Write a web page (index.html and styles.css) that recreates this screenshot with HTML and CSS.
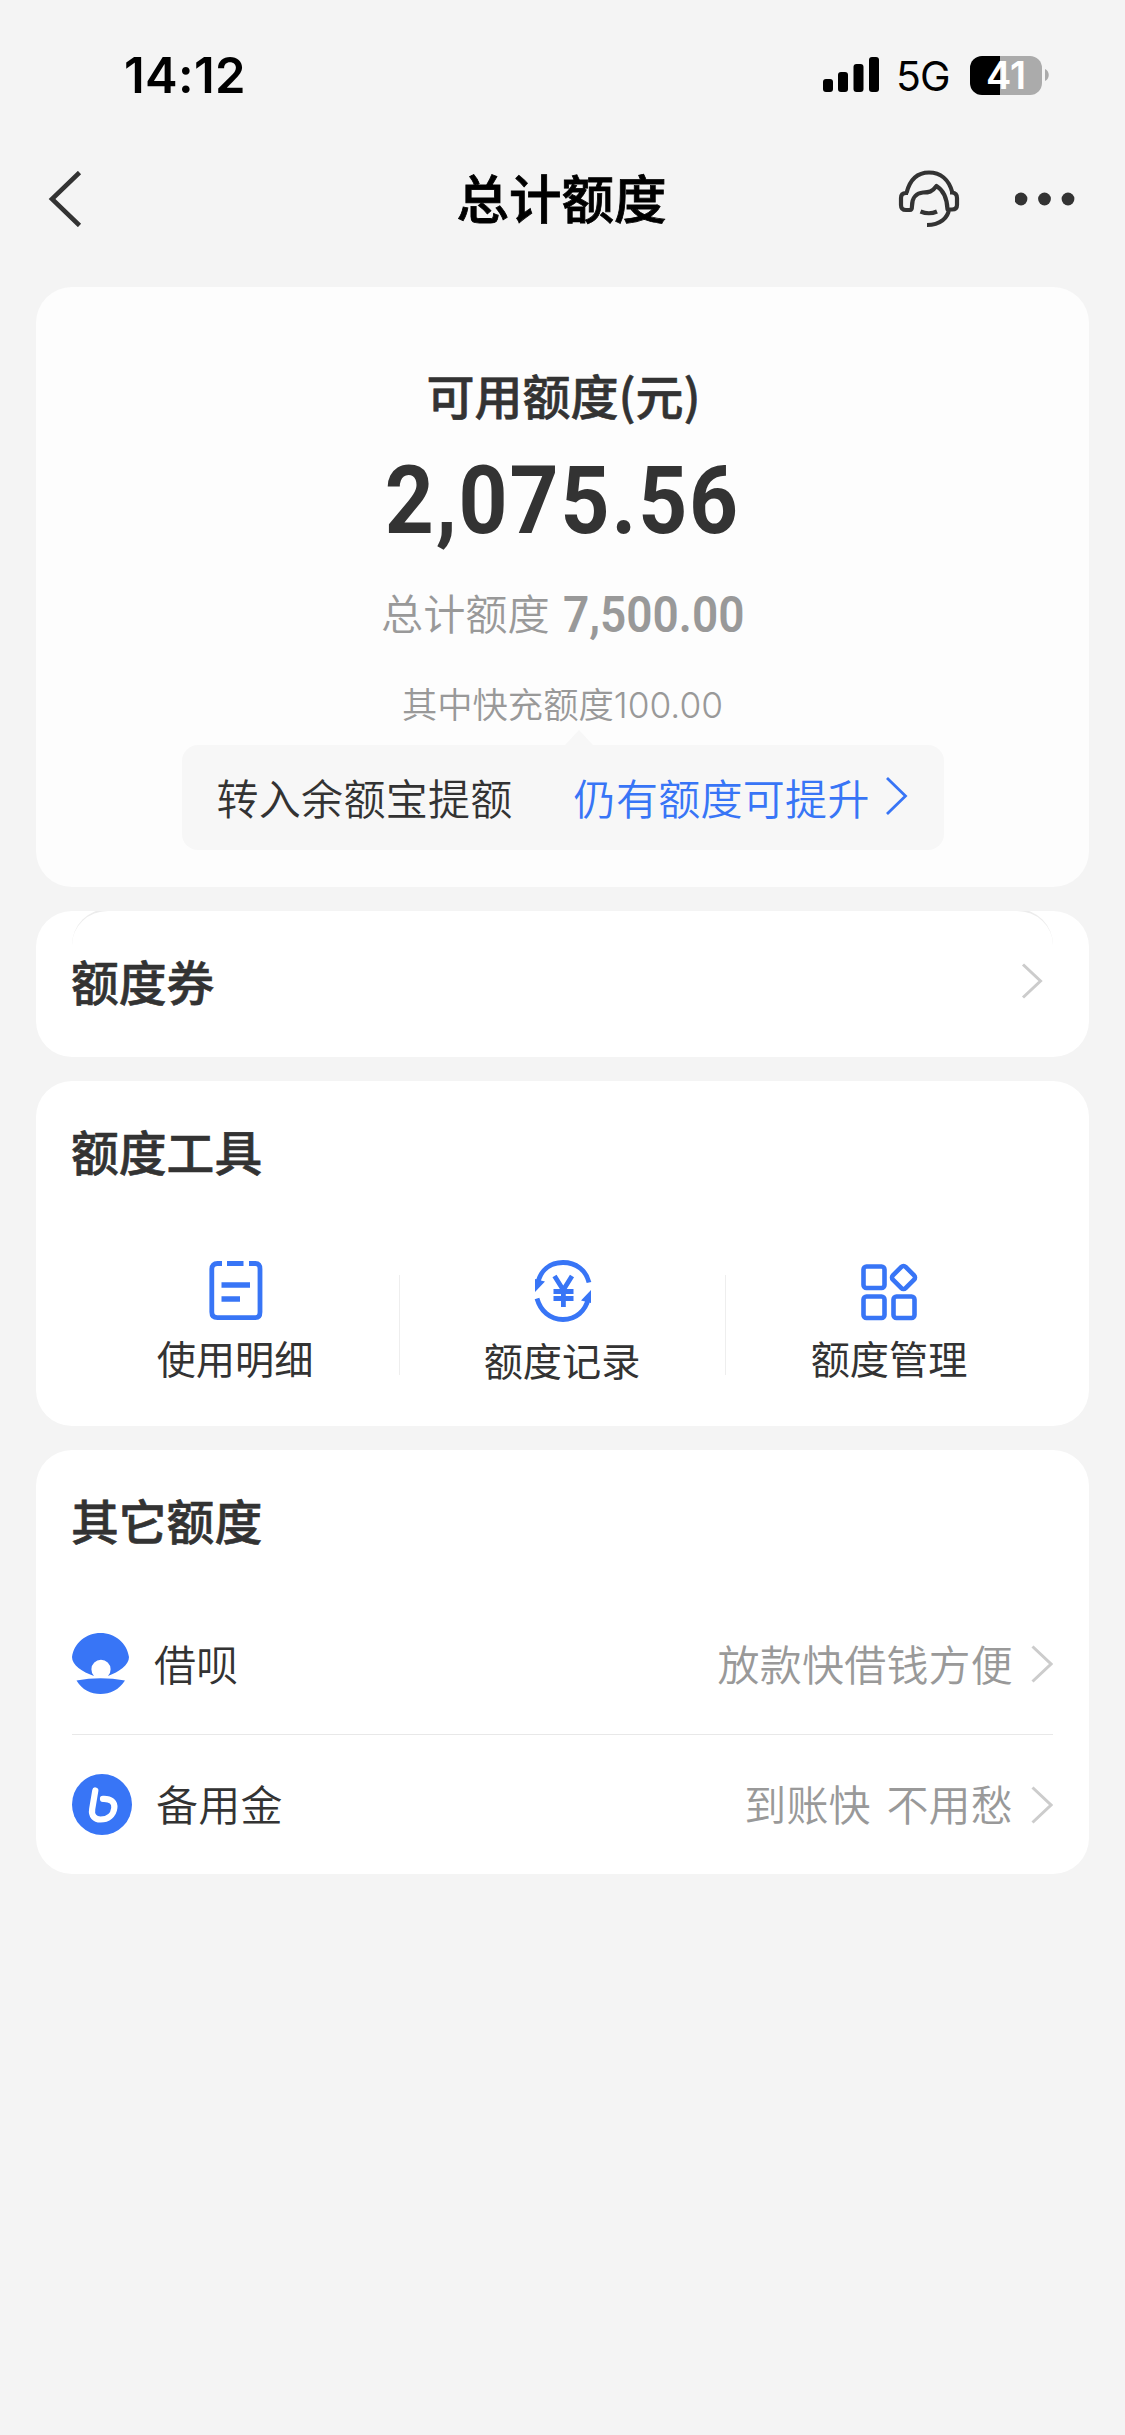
FILE: index.html
```html
<!DOCTYPE html>
<html lang="zh-CN">
<head>
<meta charset="utf-8">
<title>总计额度</title>
<link rel="stylesheet" href="styles.css">
</head>
<body>
<div class="status">
  <div class="time">14:12</div>
  <div class="status-right">
    <svg class="signal" width="56" height="36" viewBox="0 0 56 36"><rect x="0" y="22" width="10" height="13" rx="3"/><rect x="15" y="15" width="10" height="20" rx="3"/><rect x="30.500" y="7" width="10" height="28" rx="3"/><rect x="46" y="0" width="10" height="35" rx="3"/></svg>
    <span class="net">5G</span>
    <div class="battery"><span>41</span></div>
    <svg class="nub" width="4" height="12" viewBox="0 0 4 12"><path d="M0 0C5 2 5 10 0 12Z" fill="#ababab"/></svg>
  </div>
</div>
<header class="nav">
  <svg class="back" width="34" height="56" viewBox="0 0 34 56"><path d="M31.500 1.500L4 28L31.500 54.500" fill="none" stroke="#333" stroke-width="4.600"/></svg>
  <h1>总计额度</h1>
  <div class="nav-actions">
    <svg width="62" height="60" viewBox="0 0 62 60" fill="none" stroke="#333" stroke-width="4.200" stroke-linejoin="round"><path d="M8.500 24C12 10 20 3.500 31 3.500S51 10 54.500 24M13 41H8Q3 41 3 36V29Q3 24 8 24H10M12 41Q14 41 14 37C14 28 19 24 25 23.500C31 23.500 34 23 38.500 17C45 21 49 28 49.500 40.500H54Q59 40.500 59 36V29Q59 24 54 23.500H52M51 40C50 49 42 56 29 56M22.500 42.500Q31 46 39 42.500"/></svg>
    <svg width="60" height="14" viewBox="0 0 60 14" fill="#333"><circle cx="6" cy="7" r="6.400"/><circle cx="29.500" cy="7" r="6.400"/><circle cx="53" cy="7" r="6.400"/></svg>
  </div>
</header>
<main>
  <section class="card summary">
    <div class="label">可用额度(元)</div>
    <div class="amount">2,075.56</div>
    <div class="total">总计额度<b>7,500.00</b></div>
    <div class="extra">其中快充额度<span>100.00</span></div>
    <div class="tip">
      <span>转入余额宝提额</span>
      <a>仍有额度可提升</a>
      <svg width="24" height="38" viewBox="0 0 24 38"><path d="M2 1L20.500 19L2 37" fill="none" stroke="#3875f6" stroke-width="2.800"/></svg>
    </div>
  </section>
  <section class="card coupon">
    <h2>额度券</h2>
    <svg class="chev" width="22" height="38" viewBox="0 0 22 38"><path d="M2 2.500L19.500 19L2 35.500"/></svg>
  </section>
  <section class="card tools">
    <h2>额度工具</h2>
    <div class="grid">
      <div class="tool">
        <svg width="60" height="64" viewBox="0 0 60 64" fill="none" stroke="#3875f6" stroke-width="4.800"><path d="M16.500 4.500H12Q6.300 4.500 6.300 10V53Q6.300 58.700 12 58.700H50Q54.500 58.700 54.500 53V10Q54.500 4.500 50 4.500H43.500M21.500 4.500H38" transform="translate(-.5 0)"/><path d="M15.500 26H44M15.500 40H34" stroke-width="5.400"/></svg>
        <span>使用明细</span>
      </div>
      <div class="tool mid">
        <svg width="60" height="64" viewBox="0 0 60 64" fill="none" stroke="#3875f6" stroke-width="4.800"><path d="M4.500 25C7.500 11 17 3.500 30 3.500S53 11 56 23.500M4 39.500C7.500 52 17 60.500 30 60.500S52.500 52 55.500 39"/><path d="M2 20V33L12 22.500ZM58 44V31L48 41.500Z" fill="#3875f6" stroke="none"/><path d="M21.500 17L30.300 31L39 17M20.500 32.500H40.500M20.500 39.500H40.500M30.400 31V48" stroke-width="4.800"/></svg>
        <span>额度记录</span>
      </div>
      <div class="tool">
        <svg width="60" height="64" viewBox="0 0 60 64" fill="none" stroke="#3875f6" stroke-width="4.600"><rect x="3.500" y="7.500" width="21" height="21.500" rx="3"/><rect x="3.500" y="37.500" width="21" height="21.500" rx="3"/><rect x="33.500" y="37.500" width="21" height="21.500" rx="3"/><rect x="34.500" y="9.500" width="18" height="18" rx="3" transform="rotate(45 43.500 18.500)"/></svg>
        <span>额度管理</span>
      </div>
    </div>
  </section>
  <section class="card others">
    <h2>其它额度</h2>
    <div class="row">
      <svg width="58" height="62" viewBox="0 0 58 62" fill="#3875f6"><path d="M22 43C10 39 0 32 0 24C2 10 14 0 28.500 0S55 10 57 24C57 32 47 39 36 43A9.600 9.600 0 1 0 22 43ZM4.500 47.500Q28.500 43 53 47.500C47 57 38 61 28.500 61S10 57 4.500 47.500Z"/></svg>
      <span class="name">借呗</span>
      <span class="desc">放款快借钱方便</span>
      <svg class="chev" width="22" height="38" viewBox="0 0 22 38"><path d="M1.500 1.500L20 19L1.500 36.500"/></svg>
    </div>
    <div class="row">
      <svg width="60" height="62" viewBox="0 0 60 62"><ellipse cx="30" cy="30.500" rx="30" ry="30.500" fill="#3875f6"/><path d="M23.300 16.500L20.200 35C19 42 23 45.500 28.500 45.500C36 45.500 41.500 41 42.300 34C43 28 39 24.500 31 24.800" fill="none" stroke="#fff" stroke-width="6.200" stroke-linecap="round"/></svg>
      <span class="name">备用金</span>
      <span class="desc">到账快 不用愁</span>
      <svg class="chev" width="22" height="38" viewBox="0 0 22 38"><path d="M1.500 1.500L20 19L1.500 36.500"/></svg>
    </div>
  </section>
</main>
</body>
</html>
```
FILE: styles.css
```css
* { box-sizing: border-box; }
body { margin: 0; min-height: 2435px; background: #f4f4f4; color: #333; font-family: "Noto Sans CJK SC", sans-serif; }
svg { display: block; flex: none; }
h1, h2 { margin: 0; }
.status { height: 140px; padding: 45px 76px 0 124px; display: flex; justify-content: space-between; align-items: flex-start; color: #000; }
.time { padding-top: 1px; font: 600 49px/60px Inter, sans-serif; letter-spacing: .3px; }
.status-right { display: flex; align-items: center; height: 60px; }
.net { margin: 2px 0 0 17px; width: 74px; font: 400 41px/50px Inter, sans-serif; letter-spacing: -.8px; }
.battery { width: 72px; height: 39px; border-radius: 12px; background: linear-gradient(90deg, #000 30px, #ababab 30px); color: #fff; text-align: center; font: 600 38px/38px Inter, sans-serif; }
.nub { margin-left: 3px; }
.nav { height: 147px; padding: 0 50px 30px 48px; display: flex; align-items: center; justify-content: space-between; position: relative; }
.nav h1 { position: absolute; left: 0; right: 2px; top: 18px; text-align: center; font-size: 52.5px; line-height: 76px; font-weight: 500; color: #000; -webkit-text-stroke: .8px; }
.nav-actions { display: flex; align-items: center; gap: 55px; }
main { padding: 0 36px; display: flex; flex-direction: column; gap: 24px; }
.card { background: #fff; border-radius: 36px; padding: 0 36px; }
.card h2 { margin-left: -1px; font-size: 47.800px; font-weight: 500; line-height: 72px; -webkit-text-stroke: .6px; }
.summary { height: 600px; background: #fdfdfd; padding-top: 71px; display: flex; flex-direction: column; align-items: center; }
.label { padding-left: 2px; font-size: 48px; line-height: 72px; font-weight: 500; -webkit-text-stroke: .6px; }
.amount { margin-top: 21px; font: 700 95px/100px Roboto, sans-serif; letter-spacing: 2.100px; transform: scaleX(.9); }
.total { margin-top: 30px; height: 60px; display: flex; align-items: center; color: #999; font-size: 42.200px; font-weight: 350; }
.total b { margin: 7px -8px 0 5px; font: 600 50px/60px Roboto, sans-serif; transform: scaleX(.92); }
.extra { margin-top: 37px; height: 50px; line-height: 50px; color: #999; font-size: 35.300px; font-weight: 350; }
.extra span { font-family: Inter, sans-serif; font-weight: 300; }
.tip { position: relative; margin-top: 17px; width: 762px; height: 105px; border-radius: 16px; background: #f7f7f7; display: flex; align-items: center; padding: 0 0 3px 35px; font-size: 42px; letter-spacing: .3px; font-weight: 350; white-space: nowrap; }
.tip::before { content: ""; position: absolute; left: 383px; top: -15px; border: solid transparent; border-width: 0 14px 15px; border-bottom-color: #f7f7f7; }
.tip a { margin-left: 61px; color: #3875f6; }
.tip svg { margin-left: 15px; }
.coupon { position: relative; overflow: hidden; height: 146px; display: flex; align-items: center; justify-content: space-between; padding: 0 46px 6px 36px; }
.coupon::before { content: ""; position: absolute; inset: -2px 36px 0; border-top: 2px solid #ececec; border-radius: 36px; }
.chev path { fill: none; stroke: #ccc; stroke-width: 3; }
.tools { height: 345px; padding-top: 34px; }
.grid { display: grid; grid-template-columns: repeat(3, 1fr); margin-top: 72px; }
.tool { display: flex; flex-direction: column; align-items: center; font-size: 39.200px; line-height: 58px; gap: 5px; }
.tool span { margin-right: 1px; }
.mid { gap: 7px; background: linear-gradient(#eee, #eee) 0 16px / 1px 100px no-repeat, linear-gradient(#eee, #eee) 100% 16px / 1px 100px no-repeat; }
.others { height: 424px; padding-top: 34px; }
.others h2 { margin-bottom: 38px; }
.row { height: 140px; display: flex; align-items: center; font-size: 42px; letter-spacing: .2px; font-weight: 350; }
.row span { margin-top: -4px; }
.name { margin-left: 24px; }
.desc { margin-left: auto; margin-right: 18px; color: #999; word-spacing: 6px; }
.row + .row { border-top: 1px solid #e8e8e8; }
```
